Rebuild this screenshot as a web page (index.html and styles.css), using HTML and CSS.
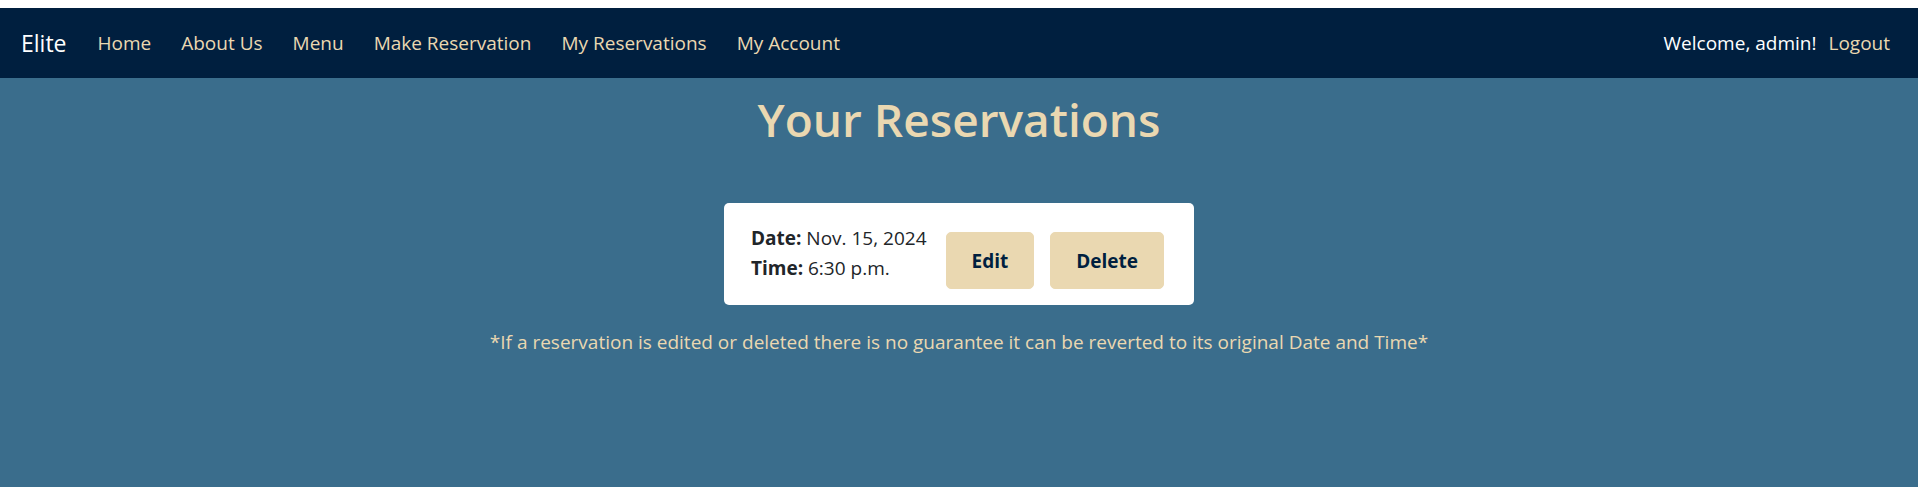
FILE: index.html
```html
<!DOCTYPE html>
<html lang="en">
<head>
<meta charset="utf-8">
<title>Your Reservations</title>
<link rel="stylesheet" href="styles.css">
</head>
<body>
<div class="page">
  <nav class="navbar">
    <a class="brand" href="#">Elite</a>
    <ul class="nav-links">
      <li><a href="#">Home</a></li>
      <li><a href="#">About Us</a></li>
      <li><a href="#">Menu</a></li>
      <li><a href="#">Make Reservation</a></li>
      <li><a href="#">My Reservations</a></li>
      <li><a href="#">My Account</a></li>
    </ul>
    <div class="nav-user">
      <span class="welcome">Welcome, admin!</span>
      <a class="logout" href="#">Logout</a>
    </div>
  </nav>
  <main class="content">
    <h1 class="title">Your Reservations</h1>
    <div class="card">
      <div class="details">
        <div><strong>Date:</strong> Nov. 15, 2024</div>
        <div><strong>Time:</strong> 6:30 p.m.</div>
      </div>
      <div class="actions">
        <button class="btn">Edit</button>
        <button class="btn">Delete</button>
      </div>
    </div>
    <p class="note">*If a reservation is edited or deleted there is no guarantee it can be reverted to its original Date and Time*</p>
  </main>
</div>
</body>
</html>
```
FILE: styles.css
```css
html, body {
  margin: 0;
  padding: 0;
}
body {
  background: #ffffff;
  padding-top: 8px;
  font-family: "Open Sans", "Noto Sans", sans-serif;
  font-size: 19px;
  line-height: 30px;
  color: #212529;
}
.page {
  min-height: calc(100vh - 8px);
  background: #3a6d8c;
}
.navbar {
  height: 70px;
  background: #001f3f;
  display: flex;
  align-items: center;
  padding: 0 28px 0 21px;
}
.brand {
  color: #ffffff;
  text-decoration: none;
  font-size: 23px;
  margin-right: 16px;
}
.nav-links {
  list-style: none;
  margin: 0;
  padding: 0;
  display: flex;
  flex: 1;
}
.nav-links a {
  display: block;
  padding: 0 15px;
  color: #ead8b1;
  text-decoration: none;
}
.nav-user {
  display: flex;
  align-items: center;
  gap: 12px;
}
.welcome {
  color: #ffffff;
}
.logout {
  color: #ead8b1;
  text-decoration: none;
}
.content {
  display: flex;
  flex-direction: column;
  align-items: center;
  padding-top: 11px;
}
.title {
  margin: 0 0 54px;
  font-size: 46px;
  font-weight: 600;
  line-height: 60px;
  color: #ead8b1;
}
.card {
  display: flex;
  align-items: flex-start;
  gap: 19px;
  background: #ffffff;
  border-radius: 5px;
  padding: 16px 30px 16px 27px;
}
.details {
  margin: 4px 0 6px;
}
.details strong {
  font-weight: 700;
}
.actions {
  display: flex;
  gap: 16px;
  margin-top: 13px;
}
.btn {
  font-family: inherit;
  font-size: 19px;
  font-weight: 700;
  line-height: 30px;
  color: #001f3f;
  background: #ead8b1;
  border: 1px solid #ead8b1;
  border-radius: 5px;
  padding: 12.5px 25px;
  cursor: pointer;
}
.note {
  margin: 22px 0 0;
  color: #ead8b1;
}
```
